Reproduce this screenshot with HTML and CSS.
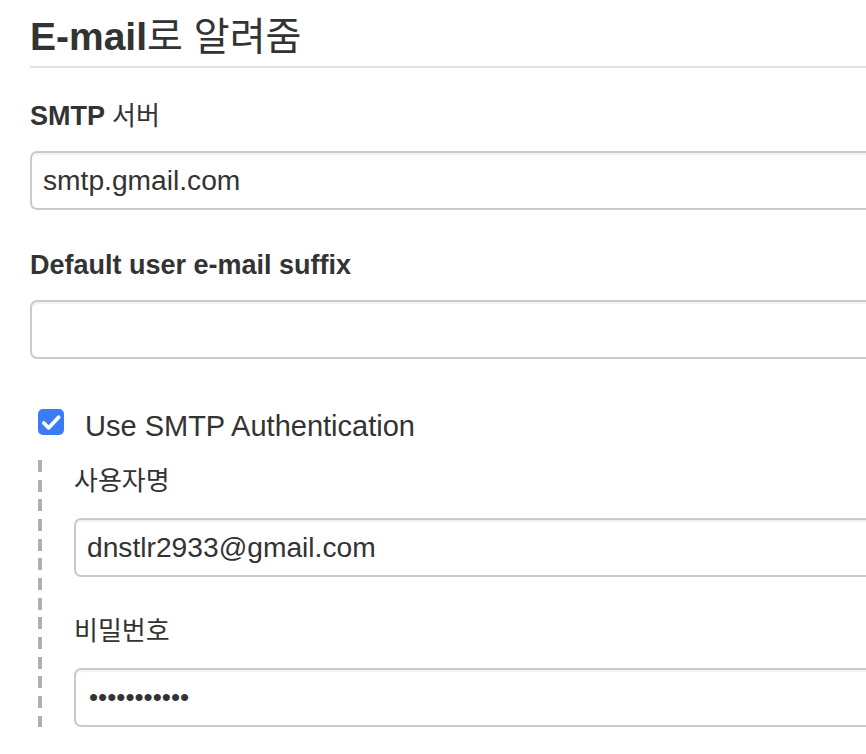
FILE: index.html
```html
<!DOCTYPE html>
<html lang="ko">
<head>
<meta charset="utf-8">
<title>E-mail로 알려줌</title>
<link rel="stylesheet" href="styles.css">
</head>
<body>
<div class="page">
  <h1 class="section-title">E-mail<span class="ko">로 알려줌</span></h1>

  <div class="field field-first">
    <label class="field-label">SMTP <span class="ko">서버</span></label>
    <input class="text-input" type="text" value="smtp.gmail.com">
  </div>

  <div class="field">
    <label class="field-label">Default user e-mail suffix</label>
    <input class="text-input" type="text" value="">
  </div>

  <div class="check-row">
    <span class="checkbox">
      <svg viewBox="0 0 25 25" width="25" height="25"><path d="M5.6 13.4 L10.2 18.2 L19.8 7.9" fill="none" stroke="#fff" stroke-width="3.6" stroke-linecap="round" stroke-linejoin="round"/></svg>
    </span>
    <span class="check-label">Use SMTP Authentication</span>
  </div>

  <div class="nested">
    <div class="field nested-first">
      <label class="field-label ko">사용자명</label>
      <input class="text-input" type="text" value="dnstlr2933@gmail.com">
    </div>
    <div class="field nested-second">
      <label class="field-label ko">비밀번호</label>
      <input class="text-input password" type="password" value="abcdefghijk">
    </div>
  </div>
</div>
</body>
</html>
```

FILE: styles.css
```css
html, body {
  margin: 0;
  padding: 0;
  overflow: hidden;
  background: #fff;
}

body {
  font-family: "Liberation Sans", "Noto Sans CJK KR", sans-serif;
  color: #333;
}

.page {
  width: 1200px;
  padding-left: 30px;
}

.section-title {
  margin: 0;
  padding-top: 16px;
  padding-bottom: 8px;
  font-size: 39px;
  line-height: 42px;
  font-weight: bold;
  border-bottom: 2px solid #e2e2e2;
}

.section-title .ko {
  font-weight: normal;
}

.field {
  display: flex;
  flex-direction: column;
  margin-top: 40px;
}

.field-first {
  margin-top: 33px;
}

.field-label {
  font-size: 27px;
  line-height: 30px;
  font-weight: bold;
  margin-bottom: 20px;
}

.field-label .ko,
.field-label.ko {
  font-weight: normal;
  font-size: 26px;
}

.text-input {
  box-sizing: border-box;
  height: 59px;
  border: 2px solid #cacaca;
  border-radius: 7px;
  box-shadow: inset 0 2px 2px rgba(0, 0, 0, 0.06);
  padding: 0 11px;
  font-family: "Liberation Sans", sans-serif;
  font-size: 28.2px;
  color: #333;
  background: #fff;
  outline: none;
  margin: 0;
  width: 100%;
}

.password {
  font-size: 26px;
  letter-spacing: 0;
  padding-left: 13px;
}

.check-row {
  display: flex;
  align-items: flex-start;
  margin-top: 51px;
  padding-left: 8px;
}

.checkbox {
  width: 26px;
  height: 26px;
  border-radius: 5px;
  background: #3b7cf6;
  display: flex;
  margin-top: -1px;
}

.checkbox svg {
  width: 26px;
  height: 26px;
}

.check-label {
  margin-left: 21px;
  font-size: 29px;
  line-height: 30px;
  margin-top: 1px;
}

.nested {
  margin-top: 19px;
  margin-left: 8px;
  padding-left: 36px;
  padding-top: 6px;
  background-image: repeating-linear-gradient(to bottom, #b0b0b0 0, #b0b0b0 12px, transparent 12px, transparent 19.67px);
  background-size: 4px 100%;
  background-repeat: no-repeat;
  background-position: left top;
}

.nested .field-label {
  margin-bottom: 22px;
}

.nested-first {
  margin-top: 0;
}

.nested-second {
  margin-top: 39px;
}
```
